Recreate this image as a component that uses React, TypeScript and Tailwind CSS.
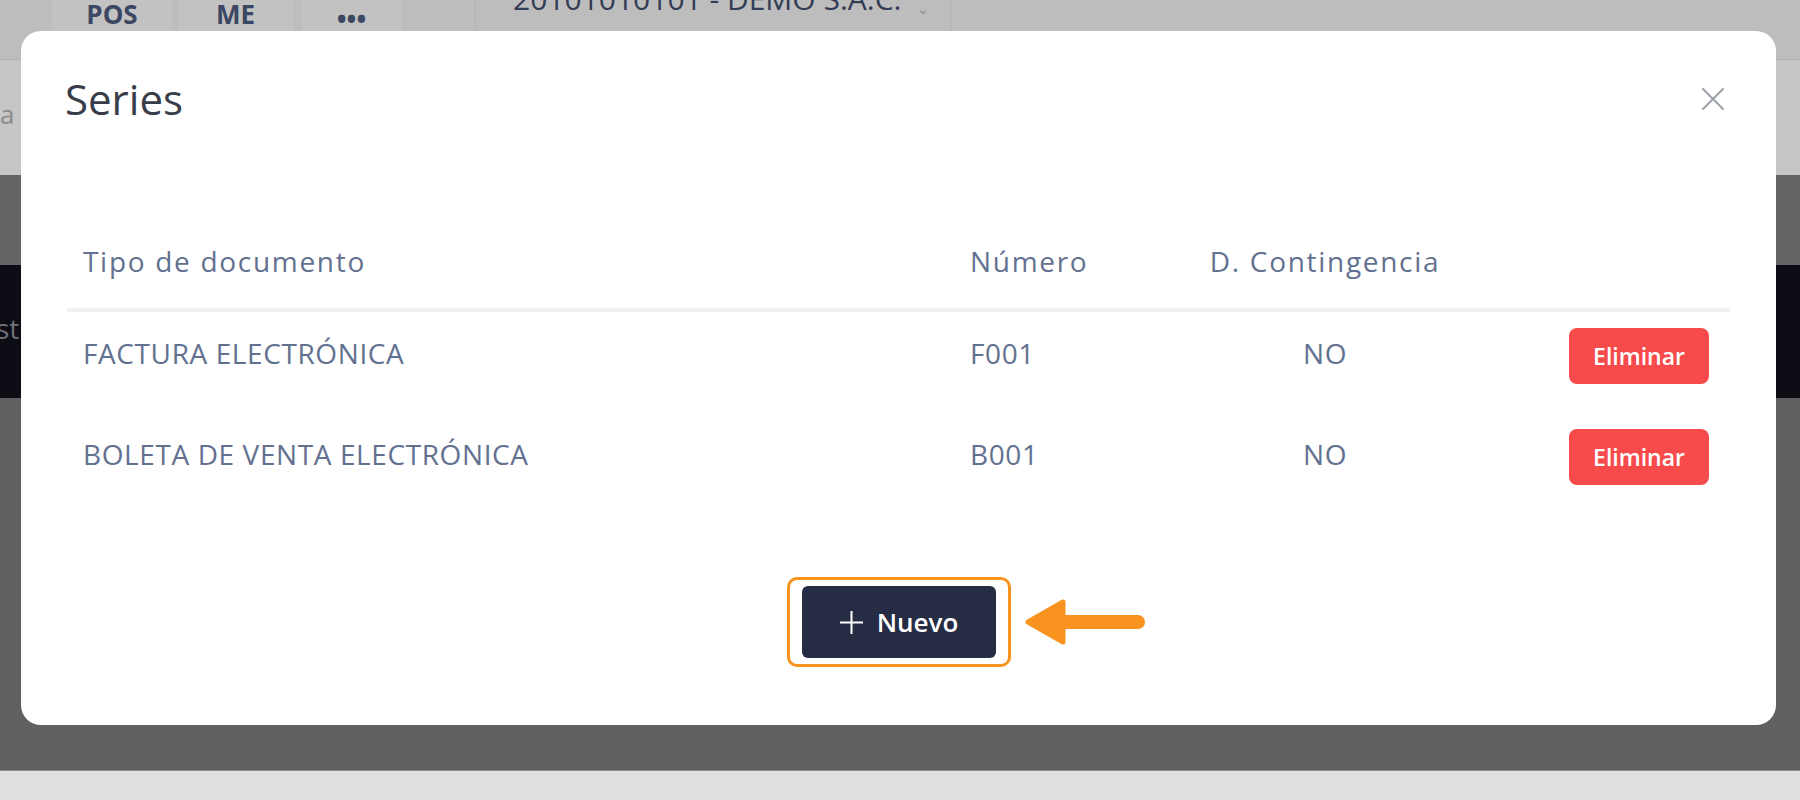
import React from 'react';

type Serie = { tipo: string; numero: string; contingencia: string };

const series: Serie[] = [
  { tipo: 'FACTURA ELECTRÓNICA', numero: 'F001', contingencia: 'NO' },
  { tipo: 'BOLETA DE VENTA ELECTRÓNICA', numero: 'B001', contingencia: 'NO' },
];

const cols = 'grid grid-cols-[887px_240px_262px_1fr]';

const BackgroundPage: React.FC = () => {
  return (
    <div className="flex h-full flex-col">
      <header className="flex h-[60px] border-b border-[#b3b3b3] bg-[#bdbdbd] text-[#3b4763]">
        <div className="flex h-full pl-[52px]">
          {['POS', 'ME', '•••'].map((t, i) => (
            <div
              key={t}
              className={`flex h-full justify-center bg-[#c2c2c2] pt-[1px] text-[26px] font-bold leading-[26px] ${
                i === 0 ? 'w-[120px]' : i === 1 ? 'ml-[6px] w-[115px]' : 'ml-[8px] w-[101px] text-[18px] pt-[6px]'
              }`}
            >
              {t}
            </div>
          ))}
        </div>
        <div className="ml-[73px] flex h-full w-[476px] border-x border-[#b1b1b1]">
          <div className="mt-[-16px] flex items-start whitespace-nowrap pl-[37px] text-[30px] font-medium leading-[30px] text-[#323c54]">
            20101010101 - DEMO S.A.C.
            <span className="ml-[16px] mt-[10px] text-[14px] text-[#8a8f99]">⌄</span>
          </div>
        </div>
      </header>
      <div className="flex h-[115px] items-center bg-[#c6c6c6] pb-[6px] text-[26px] text-[#8c8c8c]">a</div>
      <div className="h-[90px] bg-[#636465]" />
      <div className="flex h-[133px] items-center bg-[#0b0c14] pb-[8px] text-[28px] text-[#6f7078]">
        <span className="ml-[-4px]">st</span>
      </div>
      <div className="flex-1 bg-[#5f6061]" />
      <div className="h-[30px] border-t border-[#8a8a8a] bg-[#e0e0e0]" />
    </div>
  );
};

const CloseIcon = () => (
  <svg width="22" height="22" viewBox="0 0 22 22" fill="none" stroke="#9ca1aa" strokeWidth="2" strokeLinecap="round">
    <path d="M1 1L21 21M21 1L1 21" />
  </svg>
);

const PlusIcon = () => (
  <svg width="25" height="25" viewBox="0 0 25 25" fill="none" stroke="#ffffff" strokeWidth="2">
    <path d="M12.5 1v23M1 12.5h23" />
  </svg>
);

const Arrow = () => (
  <svg width="122" height="50" viewBox="0 0 122 50" className="absolute left-full top-1/2 ml-[15px] -translate-y-1/2">
    <line x1="36" y1="25" x2="115" y2="25" stroke="#f7931e" strokeWidth="14" strokeLinecap="round" />
    <polygon points="5,25 40,5 40,45" fill="#f7931e" stroke="#f7931e" strokeWidth="5" strokeLinejoin="round" />
  </svg>
);

const SeriesModal: React.FC = () => {
  return (
    <div className="absolute left-[21px] top-[31px] flex h-[694px] w-[1755px] flex-col rounded-[20px] bg-white">
      <div className="flex items-center justify-between pl-[44px] pr-[52px] pt-[44px]">
        <h2 className="text-[42px] font-normal leading-[48px] text-[#383d49]">Series</h2>
        <CloseIcon />
      </div>

      <div className="mt-[96px] px-[46px] text-[28px] leading-[36px] text-[#637190]">
        <div className={`${cols} h-[93px] items-center border-b-[4px] border-[#f1f1f3] pb-[5px] tracking-[1.7px]`}>
          <div className="pl-[16px]">Tipo de documento</div>
          <div className="pl-[16px]">Número</div>
          <div className="text-center">D. Contingencia</div>
          <div />
        </div>
        {series.map((s) => (
          <div key={s.numero} className={`${cols} h-[101px] items-start tracking-[0.6px]`}>
            <div className="mt-[23px] pl-[16px]">{s.tipo}</div>
            <div className="mt-[23px] pl-[16px]">{s.numero}</div>
            <div className="mt-[23px] text-center">{s.contingencia}</div>
            <div className="mt-[16px] flex justify-end pr-[21px]">
              <button className="h-[56px] w-[140px] rounded-[8px] bg-[#f74b4b] text-[23px] font-semibold tracking-normal text-white">
                Eliminar
              </button>
            </div>
          </div>
        ))}
      </div>

      <div className="mt-[63px] flex justify-center">
        <div className="relative rounded-[10px] border-[3px] border-[#f7931e] px-[12px] py-[6px]">
          <button className="flex h-[72px] w-[194px] items-center justify-center gap-[13px] rounded-[6px] bg-[#262c44] text-[26px] font-semibold text-white">
            <PlusIcon />
            Nuevo
          </button>
          <Arrow />
        </div>
      </div>
    </div>
  );
};

export default function App() {
  return (
    <div className="relative h-[800px] w-[1800px] overflow-hidden font-['Open_Sans',sans-serif]">
      <BackgroundPage />
      <SeriesModal />
    </div>
  );
}
